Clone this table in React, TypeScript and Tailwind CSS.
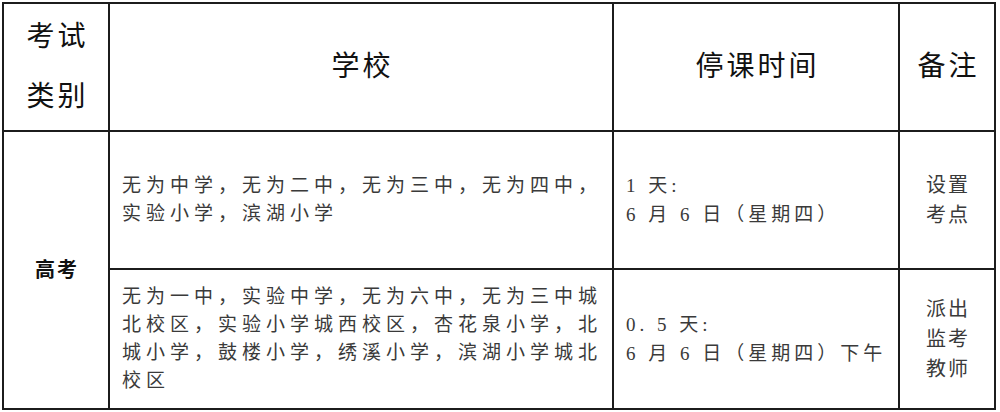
import React from 'react';

const cjk = { fontFamily: '"Liberation Serif", "Noto Sans CJK SC", serif' };

const cell = 'border-r-2 border-b-2 border-[#1c1c1c]';

const rows = [
  {
    schools: ['无为中学，无为二中，无为三中，无为四中，', '实验小学，滨湖小学'],
    time: ['1 天:', '6 月 6 日（星期四）'],
    note: ['设置', '考点'],
  },
  {
    schools: [
      '无为一中，实验中学，无为六中，无为三中城',
      '北校区，实验小学城西校区，杏花泉小学，北',
      '城小学，鼓楼小学，绣溪小学，滨湖小学城北',
      '校区',
    ],
    time: ['0. 5 天:', '6 月 6 日（星期四）下午'],
    note: ['派出', '监考', '教师'],
  },
];

const App = () => {
  return (
    <div className="w-[1000px] h-[412px] bg-white overflow-hidden" style={cjk}>
      <div className="ml-[2px] mt-[2px] grid grid-cols-[106px_504px_286px_96px] grid-rows-[128px_138px_140px] border-l-2 border-t-2 border-[#1c1c1c] w-fit">
        {/* header */}
        <div className={`${cell} flex flex-col items-center justify-center text-[28px] leading-[60px] tracking-[3px] pl-[3px] text-[#111]`}>
          <span>考试</span>
          <span>类别</span>
        </div>
        <div className={`${cell} flex items-center justify-center text-[28px] tracking-[3px] pl-[3px] text-[#111]`}>
          学校
        </div>
        <div className={`${cell} flex items-center justify-center text-[28px] tracking-[3px] pl-[3px] text-[#111]`}>
          停课时间
        </div>
        <div className={`${cell} flex items-center justify-center text-[28px] tracking-[3px] pl-[3px] text-[#111]`}>
          备注
        </div>

        {/* merged category cell */}
        <div className={`${cell} row-span-2 flex items-center justify-center text-[20px] font-bold tracking-[2px] pl-[2px] text-[#111]`}>
          高考
        </div>

        {rows.map((row, i) => (
          <React.Fragment key={i}>
            <div className={`${cell} flex flex-col justify-center pl-[12px] text-[19px] leading-[28px] tracking-[5px] text-[#3a3a3a]`}>
              {row.schools.map((line, j) => (
                <span key={j} className="whitespace-nowrap">{line}</span>
              ))}
            </div>
            <div className={`${cell} flex flex-col justify-center pl-[12px] text-[19px] leading-[29px] tracking-[4px] text-[#3a3a3a]`}>
              {row.time.map((line, j) => (
                <span key={j} className="whitespace-pre">{line}</span>
              ))}
            </div>
            <div className={`${cell} flex flex-col items-center justify-center pl-[2px] text-[20px] leading-[30px] tracking-[2px] text-[#3a3a3a]`}>
              {row.note.map((line, j) => (
                <span key={j}>{line}</span>
              ))}
            </div>
          </React.Fragment>
        ))}
      </div>
    </div>
  );
};

export default App;
